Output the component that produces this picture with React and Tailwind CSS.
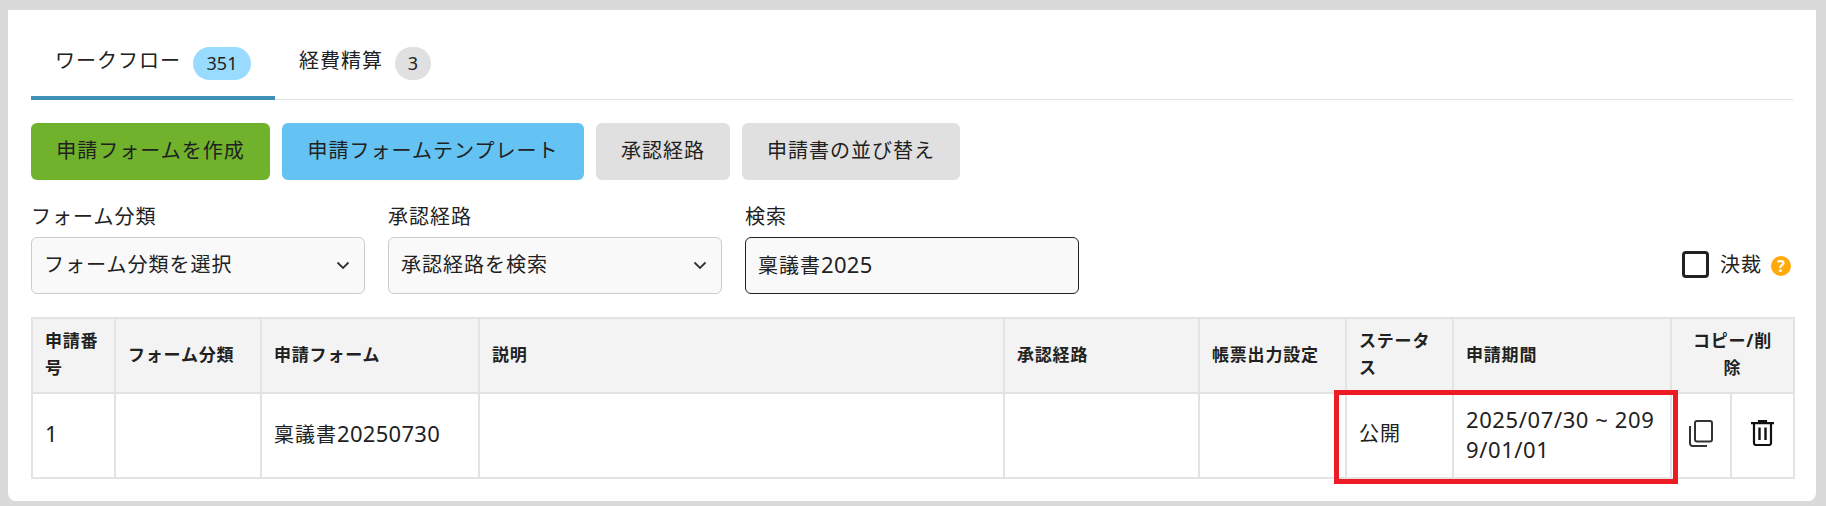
const font = { fontFamily: '"Noto Sans", "Noto Sans CJK JP", sans-serif' };

function Chevron() {
  return (
    <svg className="mr-[2px]" width="14" height="9" viewBox="0 0 14 9" fill="none" stroke="#333" strokeWidth="1.8">
      <path d="M1.5 1.5 7 7l5.5-5.5" />
    </svg>
  );
}

function CopyIcon() {
  return (
    <svg width="24" height="27" viewBox="0 0 24 27" fill="none" stroke="#333" strokeWidth="2">
      <rect x="6" y="1" width="17" height="20.5" rx="2" />
      <path d="M1 6v17.5a2.5 2.5 0 0 0 2.5 2.5H18" />
    </svg>
  );
}

function TrashIcon() {
  return (
    <svg width="23" height="26" viewBox="0 0 23 26" fill="none" stroke="#111" strokeWidth="2.2">
      <path d="M0 3.2h23M8 3V1h7v2M3 3.2V23a2 2 0 0 0 2 2h13a2 2 0 0 0 2-2V3.2" />
      <path d="M8.5 7.5v12.5M14.5 7.5V20" strokeWidth="2.4" />
    </svg>
  );
}

function Num({ children }) {
  return <span className="text-[22px] tracking-[0.3px]">{children}</span>;
}

function Field({ label, children }) {
  return (
    <div className="w-[334px]">
      <div className="h-[34px] pb-[7px] leading-[27px]">{label}</div>
      {children}
    </div>
  );
}

function SelectBox({ text }) {
  return (
    <div className="h-[57px] px-3 flex items-center justify-between bg-[#f9f9f9] border border-[#cccccc] rounded-md">
      <span className="pb-[2px]">{text}</span>
      <Chevron />
    </div>
  );
}

const headers = ["申請番号", "フォーム分類", "申請フォーム", "説明", "承認経路", "帳票出力設定", "ステータス", "申請期間"];

const cell = "border-2 border-[#e3e3e3] px-[12px] pb-[3px]";

export default function App() {
  return (
    <div style={font} className="w-[1826px] h-[506px] bg-[#dadada] pt-[10px] pl-[8px] pr-[10px] text-[#212121] text-[20px] tracking-[1px]">
      <div className="relative h-[491px] bg-white rounded-b-lg px-[23px] pt-[25px]">
        <div className="flex h-[65px] border-b border-[#e0e0e0]">
          <div className="w-[244px] h-[65px] pl-[24px] flex items-start pt-[12px] gap-3 border-b-4 border-[#3f90b8]">
            <span className="leading-[27px]">ワークフロー</span>
            <span className="w-[58px] h-[33px] pb-[1px] rounded-full bg-[#99dbff] text-[18px] tracking-normal flex items-center justify-center">351</span>
          </div>
          <div className="pl-[24px] flex items-start pt-[12px] gap-3">
            <span className="leading-[27px]">経費精算</span>
            <span className="w-[36px] h-[33px] pb-[1px] rounded-full bg-[#e0e0e0] text-[18px] tracking-normal flex items-center justify-center">3</span>
          </div>
        </div>

        <div className="flex gap-3 mt-[23px]">
          <div className="w-[239px] h-[57px] pb-[2px] rounded-md bg-[#70b22b] flex items-center justify-center">申請フォームを作成</div>
          <div className="w-[302px] h-[57px] pb-[2px] rounded-md bg-[#64c3f3] flex items-center justify-center">申請フォームテンプレート</div>
          <div className="w-[134px] h-[57px] pb-[2px] rounded-md bg-[#e0e0e0] flex items-center justify-center">承認経路</div>
          <div className="w-[218px] h-[57px] pb-[2px] rounded-md bg-[#e0e0e0] flex items-center justify-center">申請書の並び替え</div>
        </div>

        <div className="flex items-end gap-[23px] mt-[23px]">
          <Field label="フォーム分類">
            <SelectBox text="フォーム分類を選択" />
          </Field>
          <Field label="承認経路">
            <SelectBox text="承認経路を検索" />
          </Field>
          <Field label="検索">
            <div className="h-[57px] px-3 pb-[2px] flex items-center bg-[#f9f9f9] border border-[#222222] rounded-md">
              <span>
                稟議書<Num>2025</Num>
              </span>
            </div>
          </Field>
          <div className="ml-auto mr-[2px] h-[57px] flex items-center">
            <span className="w-[27px] h-[27px] mb-[2px] border-[3px] border-[#222222] rounded-[4px]" />
            <span className="ml-[11px] pb-[2px]">決裁</span>
            <span className="ml-[9px] w-[20px] h-[20px] rounded-full bg-[#ffa90a] text-white text-[16px] tracking-normal font-bold flex items-center justify-center">?</span>
          </div>
        </div>

        <table className="mt-[23px] w-[1762px] table-fixed border-collapse">
          <colgroup>
            <col className="w-[83px]" />
            <col className="w-[146px]" />
            <col className="w-[218px]" />
            <col className="w-[525px]" />
            <col className="w-[195px]" />
            <col className="w-[147px]" />
            <col className="w-[107px]" />
            <col className="w-[218px]" />
            <col className="w-[60px]" />
            <col className="w-[63px]" />
          </colgroup>
          <thead>
            <tr className="h-[75px] bg-[#f3f3f3] text-[17px] tracking-[0.8px] leading-[27px] font-bold text-left">
              {headers.map((h) => (
                <th key={h} className={`${cell} font-bold`}>
                  {h}
                </th>
              ))}
              <th colSpan={2} className="border-2 border-[#e3e3e3] px-[14px] pb-[3px] text-center font-bold">
                コピー/削除
              </th>
            </tr>
          </thead>
          <tbody>
            <tr className="h-[85px] leading-[30px]">
              <td className={cell}>
                <Num>1</Num>
              </td>
              <td className={cell}></td>
              <td className={cell}>
                稟議書<Num>20250730</Num>
              </td>
              <td className={cell}></td>
              <td className={cell}></td>
              <td className={cell}></td>
              <td className={cell}>公開</td>
              <td className={`${cell} break-all text-[22px] tracking-[0.6px]`}>2025/07/30 ~ 2099/01/01</td>
              <td className="border-2 border-[#e3e3e3] pb-[5px]">
                <div className="flex justify-center">
                  <CopyIcon />
                </div>
              </td>
              <td className="border-2 border-[#e3e3e3] pb-[5px]">
                <div className="flex justify-center">
                  <TrashIcon />
                </div>
              </td>
            </tr>
          </tbody>
        </table>

        <div className="absolute left-[1326px] top-[380px] w-[344px] h-[94px] border-[5px] border-[#ed1c24]" />
      </div>
    </div>
  );
}
